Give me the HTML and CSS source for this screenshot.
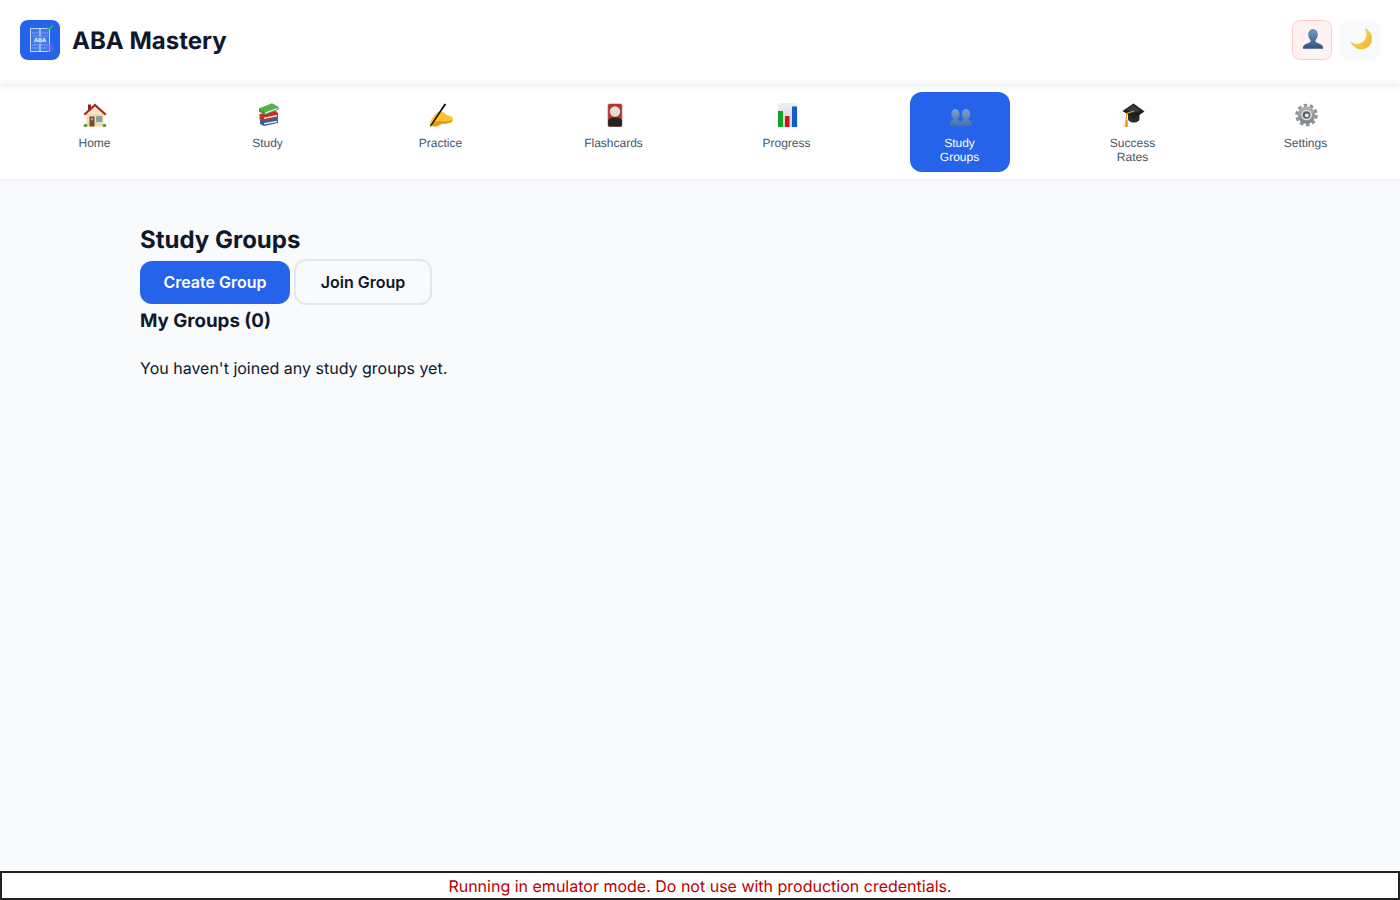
FILE: index.html
```html
<!DOCTYPE html>
<html lang="en">
<head>
<meta charset="utf-8">
<title>ABA Mastery</title>
<link rel="stylesheet" href="styles.css">
</head>
<body>
<svg class="defs" width="0" height="0" aria-hidden="true">
  <defs>
    <linearGradient id="bust" x1="0" y1="0" x2="0" y2="1"><stop offset="0" stop-color="#6f9cc2"/><stop offset="1" stop-color="#2f5580"/></linearGradient>
    <linearGradient id="bust2" x1="0" y1="0" x2="0" y2="1"><stop offset="0" stop-color="#7f9fce"/><stop offset="1" stop-color="#486fa8"/></linearGradient>
    <linearGradient id="moon" x1="0" y1="0" x2="1" y2="1"><stop offset="0" stop-color="#ffe27a"/><stop offset="1" stop-color="#f2b01e"/></linearGradient>
    <linearGradient id="gear" x1="0" y1="0" x2="0" y2="1"><stop offset="0" stop-color="#b4b7ba"/><stop offset="1" stop-color="#7d8185"/></linearGradient>
    <linearGradient id="chartbg" x1="0" y1="0" x2="0" y2="1"><stop offset="0" stop-color="#eef1f4"/><stop offset="1" stop-color="#c9d0d8"/></linearGradient>
  </defs>
</svg>
<header class="topbar">
  <div class="brand">
    <svg class="logo" width="40" height="40" viewBox="0 0 40 40" aria-hidden="true">
      <rect width="40" height="40" rx="8" fill="#2563eb"/>
      <rect x="10.5" y="8.5" width="19" height="23" fill="#5f8df0" fill-opacity=".45" stroke="#c3d4fa" stroke-width="1"/>
      <path d="M20 8v24" stroke="#dbe6fd" stroke-width="1.2"/>
      <path d="M12 13h16M12 16h16M12 25h16M12 28h16" stroke="#93b2f6" stroke-width=".7"/>
      <rect x="13" y="16.5" width="14" height="7" fill="#4f81ee"/>
      <text x="20" y="22.3" class="logo-text">ABA</text>
      <circle cx="30" cy="28" r="4" fill="#7c5cf0" fill-opacity=".55"/>
      <path d="M27 7.5l2 2.2 3.6-4" fill="none" stroke="#22c55e" stroke-width="1.6"/>
    </svg>
    <h1 class="brand-name">ABA Mastery</h1>
  </div>
  <div class="top-actions">
    <button class="icon-btn icon-btn-user" aria-label="Account">
      <svg class="icon" viewBox="0 0 24 24" aria-hidden="true">
        <path d="M12 1c3 0 5.200 2.500 5.200 6.200 0 2.600-1 4.700-2.400 6v1.500c0 1 3 1.800 5.500 3 1.800.9 2.700 2 2.700 4.800H1c0-2.800.9-3.900 2.700-4.800 2.500-1.200 5.500-2 5.500-3v-1.500C7.800 11.900 6.800 9.800 6.800 7.200 6.800 3.500 9 1 12 1z" fill="url(#bust)"/>
      </svg>
    </button>
    <button class="icon-btn icon-btn-theme" aria-label="Theme">
      <svg class="icon" viewBox="0 0 24 24" aria-hidden="true">
        <path d="M17 .8c4 2 6.800 6.200 6.800 10.700 0 6.500-5 11.500-11.300 11.500-5 0-9.500-3-11.500-7.800 2 1.900 4.200 2.500 6.500 2.500C13.500 17.700 18.200 12.500 18.200 7c0-2.200-.4-4.300-1.200-6.200z" fill="url(#moon)" stroke="#e9a91c" stroke-width=".4"/>
      </svg>
    </button>
  </div>
</header>
<nav class="tabs">
  <a class="tab">
    <svg class="icon" viewBox="0 0 24 24" aria-hidden="true">
      <rect x="5" y="1.500" width="3" height="6" fill="#7a2a22"/>
      <rect x="3.500" y="10" width="17" height="13.500" fill="#f2dcae"/>
      <path d="M12 3.500L20 11H4z" fill="#f7e6c4"/>
      <path d="M12 .5L23.500 11l-1.500 1.500L12 3.500 2 12.500.5 11z" fill="#a52a22"/>
      <rect x="6.500" y="13.500" width="5" height="10" fill="#7a4a2c"/>
      <rect x="7.800" y="14.800" width="2.400" height="2.600" fill="#6fb0d8"/>
      <rect x="13.500" y="13.500" width="5.500" height="5" fill="#5fa8de" stroke="#b08a5c" stroke-width=".6"/>
      <circle cx="2.500" cy="22.500" r="1.800" fill="#5e9a3a"/>
      <circle cx="21.500" cy="22.500" r="1.800" fill="#5e9a3a"/>
    </svg>
    <span class="tab-label">Home</span>
  </a>
  <a class="tab">
    <svg class="icon" viewBox="0 0 24 24" aria-hidden="true">
      <path d="M4 16l16-2.500 2 1.500v5L8 23l-4-2z" fill="#2f5fa8"/>
      <path d="M8 20l13-2.300v1.500L8 21.500z" fill="#e8edf2"/>
      <path d="M3.500 11l16.500-3 2 2v4.500L8 18l-4.500-2z" fill="#c42f28"/>
      <path d="M8 14.500l13-2.500v1.500L8 16z" fill="#f2e6dc"/>
      <path d="M3 5.500L16 .5l6.500 3.500v2.500L9 12 3 8.500z" fill="#3f9a3a"/>
      <path d="M3 6l6 3.500L22.500 4l-6.500-3.500z" fill="#55b34c"/>
      <path d="M9 9.500l12.500-4.800v1.300L9 11z" fill="#eef2e8"/>
    </svg>
    <span class="tab-label">Study</span>
  </a>
  <a class="tab">
    <svg class="icon" viewBox="0 0 24 24" aria-hidden="true">
      <path d="M1 20c1-3 2.500-6 5-8.500C8 9.500 10 8 12.500 8.500c2 .5 3.500 2.500 5.500 3.500 2 .8 4.500.8 5.500 2.800.8 1.700.2 4-1.500 4.700-2.500 1-6 1-8.500 1.500-2.500.5-5 2.500-8 2.500-2 0-3.500-1-4.500-2.500z" fill="#fcc22f"/>
      <path d="M4 19c3-1.500 7-1 11-.8 3 .2 6 .2 8.500-1.700-.2 1.400-.8 2.500-1.800 3-2.500 1-6 1-8.500 1.500-2.500.5-5 2.500-8 2.500-1 0-2-.3-2.700-.9z" fill="#e89b16"/>
      <path d="M15.500.5l1.700 1L2 23.500.8 23z" fill="#111"/>
    </svg>
    <span class="tab-label">Practice</span>
  </a>
  <a class="tab">
    <svg class="icon" viewBox="0 0 24 24" aria-hidden="true">
      <rect x="5.500" y=".5" width="15" height="23.500" rx="2" fill="#a9a9a9"/>
      <rect x="6.200" y="1" width="13.600" height="22.500" rx="1.500" fill="#b8312b"/>
      <path d="M6.200 17c2-2 4-2.500 6.800-2.500s4.800.5 6.800 2.500v5c0 .9-.6 1.500-1.500 1.500H7.700c-.9 0-1.500-.6-1.500-1.500z" fill="#232323"/>
      <circle cx="13" cy="8.500" r="5.200" fill="#e6dccb"/>
    </svg>
    <span class="tab-label">Flashcards</span>
  </a>
  <a class="tab">
    <svg class="icon" viewBox="0 0 24 24" aria-hidden="true">
      <rect x="3" y="0" width="19.500" height="24" fill="url(#chartbg)"/>
      <rect x="3" y="8" width="5" height="16" fill="#12a32a"/>
      <rect x="10" y="13" width="4.500" height="11" fill="#c81818"/>
      <rect x="17" y="3.500" width="5" height="20.500" fill="#0f5fc4"/>
    </svg>
    <span class="tab-label">Progress</span>
  </a>
  <a class="tab tab-active">
    <svg class="icon" viewBox="0 0 24 24" aria-hidden="true">
      <path d="M7.500 6c2.500 0 4 2 4 5 0 2-.8 3.500-1.800 4.600v1.400c2 .8 3.300 1.500 3.300 6H1.500c0-4.500 1.500-5.200 3.500-6v-1.400C4 14.500 3.300 13 3.300 11c0-3 1.700-5 4.200-5z" fill="url(#bust2)"/>
      <path d="M18 6c2.500 0 4.200 2 4.200 5 0 2-.7 3.500-1.700 4.600v1.400c2 .8 3.700 1.500 3.700 6H12c0-4.500 1.300-5.200 3.300-6v-1.400c-1-1.100-1.500-2.600-1.500-4.600 0-3 1.700-5 4.200-5z" fill="url(#bust2)"/>
    </svg>
    <span class="tab-label">Study Groups</span>
  </a>
  <a class="tab">
    <svg class="icon" viewBox="0 0 24 24" aria-hidden="true">
      <path d="M7 10v6c0 1.500 2.500 3.500 6 3.500s5.500-2 5.500-3.500v-6z" fill="#2a2a2a"/>
      <path d="M12.500.5L23.500 8.500 13 15.500 1.500 8z" fill="#1e1e1e"/>
      <path d="M12.500 2L20 8l-7 1.500L5 7z" fill="#3c3c3c"/>
      <path d="M13 8L5.800 10.500 5 18" fill="none" stroke="#e59a26" stroke-width="1.200"/>
      <path d="M4.500 17h2.200l.3 7H3.500z" fill="#f0a02c"/>
    </svg>
    <span class="tab-label">Success Rates</span>
  </a>
  <a class="tab">
    <svg class="icon" viewBox="0 0 24 24" aria-hidden="true">
      <circle cx="12.500" cy="12" r="9.800" fill="none" stroke="#8f9397" stroke-width="3" stroke-dasharray="3.500 2.660"/>
      <circle cx="12.500" cy="12" r="8.800" fill="url(#gear)"/>
      <circle cx="12.500" cy="12" r="5.300" fill="#dfe1e3"/>
      <circle cx="12.500" cy="12" r="3.800" fill="#5a5d60"/>
      <circle cx="12.800" cy="12.300" r="1.900" fill="#eceded"/>
    </svg>
    <span class="tab-label">Settings</span>
  </a>
</nav>
<main class="content">
  <h2 class="page-title">Study Groups</h2>
  <div class="actions">
    <button class="btn btn-primary">Create Group</button>
    <button class="btn btn-secondary">Join Group</button>
  </div>
  <h3 class="section-title">My Groups (0)</h3>
  <p class="empty">You haven't joined any study groups yet.</p>
</main>
<p class="emulator-warning">Running in emulator mode. Do not use with production credentials.</p>
</body>
</html>
```
FILE: styles.css
```css
* { box-sizing: border-box; }
html, body { margin: 0; height: 100%; }
body {
  font-family: Inter, "Noto Sans", sans-serif;
  background: #f8fafc;
  color: #0f172a;
  overflow: hidden;
  text-rendering: geometricPrecision;
}
.defs { position: absolute; }
.icon { display: block; width: 24px; height: 24px; flex: none; }
.topbar {
  height: 84px;
  padding: 20px;
  background: #fff;
  display: flex;
  align-items: center;
  justify-content: space-between;
  box-shadow: 0 2px 8px rgba(0,0,0,.08);
  position: relative;
  border-bottom: 4px solid #f8fafc;
}
.brand { display: flex; align-items: center; gap: 12px; }
.logo { display: block; }
.logo-text { font: 700 5.5px "Liberation Sans", sans-serif; fill: #fff; text-anchor: middle; }
.brand-name { margin: 0; padding-top: 2px; font-size: 24px; font-weight: 700; line-height: 30px; color: #0f172a; }
.top-actions { display: flex; gap: 8px; }
.icon-btn {
  width: 40px;
  height: 40px;
  padding: 0;
  border-radius: 8px;
  display: flex;
  align-items: center;
  justify-content: center;
}
.icon-btn .icon { width: 22px; height: 22px; margin: -2px 0 0 2px; }
.icon-btn-user { background: #fef2f2; border: 1px solid #fecaca; }
.icon-btn-theme { background: #f8fafc; border: none; }
.tabs {
  height: 97px;
  padding: 8px;
  background: #fff;
  display: flex;
  border-bottom: 2px solid #f1f5f9;
}
.tab {
  flex: 1 1 0;
  display: flex;
  flex-direction: column;
  align-items: center;
  padding: 11px 0 0;
  color: #475569;
  height: 80px;
}
.tab-active { flex: 0 0 100px; margin: 0 36.5px; background: #2563eb; color: #fff; border-radius: 12px; }
.tab-label {
  font-family: "Liberation Sans", Arial, sans-serif;
  font-size: 12px;
  line-height: 14px;
  margin-top: 9px;
  text-align: center;
  max-width: 60px;
}
.content { width: 1120px; margin: 0 auto; padding-top: 44px; }
.page-title { margin: 0; font-size: 24px; font-weight: 700; line-height: 30px; }
.actions { display: flex; gap: 4px; align-items: flex-start; margin-top: 4px; }
.btn { font-family: Inter, sans-serif; font-size: 16px; font-weight: 600; border-radius: 12px; cursor: pointer; }
.btn-primary { width: 150px; height: 43px; margin-top: 2px; padding: 0 0 2px; background: #2563eb; color: #fff; border: none; }
.btn-secondary { width: 138px; height: 46px; padding: 0; background: #f8fafc; color: #0f172a; border: 2px solid #e2e8f0; }
.section-title { margin: 2px 0 0; font-size: 18.72px; font-weight: 700; line-height: 28px; }
.empty { margin: 21px 0 0; font-size: 16px; line-height: 24px; color: #0f172a; }
.emulator-warning {
  position: fixed;
  left: 0;
  bottom: 0;
  width: 100%;
  margin: 0;
  background: #fff;
  border: 2px solid #222;
  color: #b00;
  text-align: center;
  font-size: 16px;
  line-height: 26px;
  height: 29px;
}
```
